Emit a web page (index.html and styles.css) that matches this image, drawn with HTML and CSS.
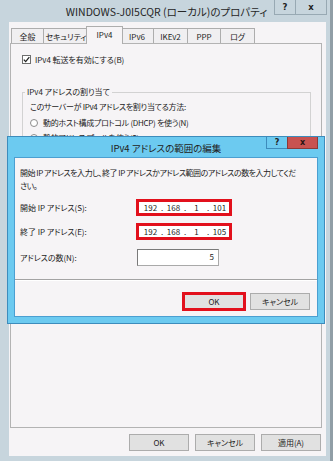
FILE: index.html
```html
<!DOCTYPE html>
<html lang="ja">
<head>
<meta charset="utf-8">
<title>プロパティ</title>
<link rel="stylesheet" href="styles.css">
</head>
<body>
<div class="frame">
  <div class="titlebar">
    <span class="title">WINDOWS-J0I5CQR (ローカル)のプロパティ</span>
    <div class="caps"><span class="cap help">?</span><span class="cap close">x</span></div>
  </div>
  <div class="client">
    <div class="tabs">
      <span class="tab first">全般</span>
      <span class="tab w46">セキュリティ</span>
      <span class="tab sel">IPv4</span>
      <span class="tab w34">IPv6</span>
      <span class="tab w35">IKEv2</span>
      <span class="tab w34">PPP</span>
      <span class="tab w35">ログ</span>
    </div>
    <div class="page">
      <div class="check">
        <span class="box"><svg width="7" height="7" viewBox="0 0 7 7"><path d="M0.8 3.6 L2.7 5.6 L6.3 1.2" fill="none" stroke="#222" stroke-width="1.3"/></svg></span>
        <span>IPv4 転送を有効にする(B)</span>
      </div>
      <fieldset class="group">
        <legend>IPv4 アドレスの割り当て</legend>
        <p class="gtext">このサーバーが IPv4 アドレスを割り当てる方法:</p>
        <div class="radio"><span class="rb"></span><span>動的ホスト構成プロトコル (DHCP) を使う(N)</span></div>
        <div class="radio second"><span class="rb"></span><span>静的アドレス プールを使う(S)</span></div>
      </fieldset>
    </div>
    <div class="actions">
      <span class="btn">OK</span>
      <span class="btn">キャンセル</span>
      <span class="btn">適用(A)</span>
    </div>
  </div>
</div>

<div class="dialog">
  <div class="dtitle">
    <span class="dtext">IPv4 アドレスの範囲の編集</span>
    <div class="dcaps"><span class="dcap dhelp">?</span><span class="dcap dclose">x</span></div>
  </div>
  <div class="dpanel">
    <p class="intro">開始 IP アドレスを入力し、終了 IP アドレスかアドレス範囲のアドレスの数を入力してくだ<br>さい。</p>
    <div class="frow r1">
      <span class="flabel">開始 IP アドレス(S):</span>
      <span class="ipbox"><span class="seg">192</span><span class="dot">.</span><span class="seg">168</span><span class="dot">.</span><span class="seg">1</span><span class="dot">.</span><span class="seg">101</span></span>
    </div>
    <div class="frow r2">
      <span class="flabel">終了 IP アドレス(E):</span>
      <span class="ipbox"><span class="seg">192</span><span class="dot">.</span><span class="seg">168</span><span class="dot">.</span><span class="seg">1</span><span class="dot">.</span><span class="seg">105</span></span>
    </div>
    <div class="frow r3">
      <span class="flabel">アドレスの数(N):</span>
      <span class="numbox">5</span>
    </div>
    <div class="sep"></div>
    <div class="dactions">
      <span class="okred"><span>OK</span></span>
      <span class="btn">キャンセル</span>
    </div>
  </div>
</div>
</body>
</html>
```
FILE: styles.css
```css
html, body {
  margin: 0;
  padding: 0;
}
body {
  width: 333px;
  height: 461px;
  overflow: hidden;
  position: relative;
  background: linear-gradient(to right, #c7d5dd 330px, #909ea6 330px);
  font-family: "Noto Sans CJK JP", "Noto Sans", sans-serif;
  font-size: 8px;
  letter-spacing: -0.05px;
  color: #1c1c1c;
  font-feature-settings: "palt";
}
p { margin: 0; }

.titlebar {
  height: 22px;
  display: grid;
  grid-template-columns: 1fr auto 1fr;
  align-items: start;
}
.title {
  grid-column: 2;
  font-size: 10.5px;
  letter-spacing: 0;
  line-height: 23px;
  color: #262626;
  white-space: nowrap;
}
.caps {
  grid-column: 3;
  justify-self: end;
  display: flex;
  margin-right: 6px;
}
.cap {
  box-sizing: border-box;
  height: 15px;
  border: 1px solid #98a9b3;
  border-top: none;
  display: flex;
  align-items: center;
  justify-content: center;
  font-family: "DejaVu Sans", sans-serif;
  font-weight: bold;
  font-size: 8.5px;
  letter-spacing: 0;
  color: #222;
}
.help { width: 22px; }
.close { width: 32px; margin-left: -1px; }

.client {
  box-sizing: border-box;
  margin-left: 9px;
  width: 317px;
  height: 434px;
  background: #f6f4f6;
  padding-top: 4px;
}
.tabs {
  display: flex;
  align-items: flex-end;
  margin-left: 2px;
  height: 17px;
  position: relative;
  z-index: 1;
}
.tab {
  box-sizing: border-box;
  width: 33px;
  height: 15px;
  border: 1px solid #adadad;
  border-bottom: none;
  margin-left: -1px;
  background: #f0eff1;
  display: flex;
  align-items: center;
  justify-content: center;
  white-space: nowrap;
}
.tab.first { margin-left: 0; }
.tab.w46 { width: 46px; }
.tab.w34 { width: 34px; }
.tab.w35 { width: 35px; }
.tab.sel {
  width: 37px;
  height: 18px;
  margin: 0 -2px -1px -3px;
  background: #f6f4f6;
  position: relative;
  z-index: 2;
  padding-bottom: 2px;
}

.page {
  box-sizing: border-box;
  margin-left: 1px;
  width: 312px;
  height: 385px;
  border: 1px solid #b3b3b3;
  padding: 11px 0 0 11px;
}
.check {
  display: flex;
  align-items: center;
  gap: 4px;
  height: 9px;
  white-space: nowrap;
}
.box {
  box-sizing: border-box;
  width: 9px;
  height: 9px;
  border: 1px solid #6e6e6e;
  background: #fff;
  display: flex;
  align-items: center;
  justify-content: center;
}
.group {
  box-sizing: border-box;
  margin: 22px 0 0 0;
  padding: 0;
  width: 289px;
  height: 110px;
  border: 1px solid #d2d2d2;
}
.group legend {
  margin-left: 2px;
  padding: 0 2px;
  line-height: 12px;
}
.gtext {
  margin-top: 2px;
  padding-left: 7px;
  line-height: 13px;
  letter-spacing: -0.3px;
  white-space: nowrap;
}
.radio {
  margin-top: 3px;
  padding-left: 7px;
  display: flex;
  align-items: center;
  gap: 5px;
  height: 13px;
  letter-spacing: -0.3px;
  white-space: nowrap;
}
.radio.second { margin-top: 2px; }
.rb {
  box-sizing: border-box;
  width: 8px;
  height: 8px;
  border: 1px solid #8c8c8c;
  border-radius: 50%;
  background: #fff;
}

.actions {
  display: flex;
  justify-content: flex-end;
  gap: 6px;
  margin-top: 6px;
  padding-right: 5px;
}
.btn {
  box-sizing: border-box;
  width: 60px;
  height: 17px;
  background: #e1e1e1;
  border: 1px solid #acacac;
  display: flex;
  align-items: center;
  justify-content: center;
  white-space: nowrap;
}

/* dialog overlay */
.dialog {
  position: absolute;
  left: 7px;
  top: 136px;
  width: 318px;
  height: 188px;
  box-sizing: border-box;
  background: #6ccaf0;
  border: 1px solid #3d8cbc;
  display: flex;
  flex-direction: column;
}
.dtitle {
  height: 20px;
  display: grid;
  grid-template-columns: 1fr auto 1fr;
  align-items: start;
}
.dtext {
  grid-column: 2;
  font-size: 9.5px;
  letter-spacing: 0;
  line-height: 23px;
  color: #222;
  white-space: nowrap;
}
.dcaps {
  grid-column: 3;
  justify-self: end;
  display: flex;
  margin-right: 6px;
}
.dcap {
  box-sizing: border-box;
  height: 12px;
  display: flex;
  align-items: center;
  justify-content: center;
  font-family: "DejaVu Sans", sans-serif;
  font-weight: bold;
  font-size: 8px;
  letter-spacing: 0;
  color: #222;
}
.dhelp {
  width: 21px;
  border: 1px solid #3d8cbc;
  border-top: none;
  border-right: none;
}
.dclose {
  width: 31px;
  background: #c85250;
  border: 1px solid #8c3a38;
  border-top: none;
  color: #2a1414;
}
.dpanel {
  flex: 1;
  box-sizing: border-box;
  margin: 0 6px 6px 6px;
  background: #f6f4f6;
  border: 1px solid #4b9fd1;
  padding-top: 8px;
}
.intro {
  padding-left: 5px;
  line-height: 13px;
  letter-spacing: -0.48px;
  white-space: nowrap;
}
.frow {
  display: flex;
  align-items: center;
  height: 17px;
  padding-left: 5px;
  white-space: nowrap;
}
.r1 { margin-top: 7px; }
.r2 { margin-top: 7px; }
.r3 { margin-top: 9px; }
.flabel { width: 116px; }
.ipbox {
  box-sizing: border-box;
  width: 96px;
  height: 17px;
  border: 3px solid #e2101c;
  background: #fff;
  padding-left: 3px;
  display: flex;
  align-items: center;
}
.seg { width: 17px; text-align: center; letter-spacing: 0; }
.dot { width: 6px; text-align: center; letter-spacing: 0; }
.numbox {
  box-sizing: border-box;
  margin-left: 1px;
  width: 82px;
  height: 17px;
  background: #fff;
  border: 1px solid #a9a9a9;
  border-top-color: #7a7a7a;
  border-left-color: #7a7a7a;
  text-align: right;
  padding-right: 4px;
  line-height: 14px;
}
.sep {
  margin-top: 13px;
  border-top: 1px solid #a3a3a3;
  border-bottom: 1px solid #ffffff;
}
.dactions {
  display: flex;
  justify-content: flex-end;
  align-items: center;
  gap: 4px;
  margin-top: 11px;
  padding-right: 7px;
}
.okred {
  box-sizing: border-box;
  width: 64px;
  height: 19px;
  border: 3px solid #e2101c;
  background: #e1e1e1;
  display: flex;
  align-items: center;
  justify-content: center;
}
```
